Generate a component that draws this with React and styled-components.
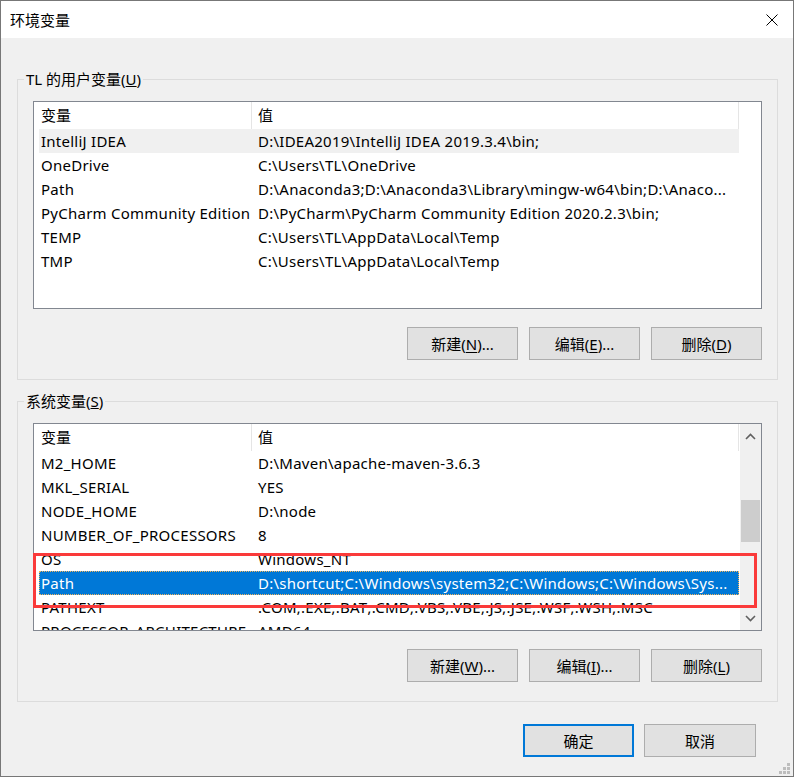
import React from 'react';
import styled, { createGlobalStyle } from 'styled-components';

const Global = createGlobalStyle`
  html, body { margin: 0; padding: 0; background: #f0f0f0; }
  body { font-family: "Noto Sans", "Noto Sans CJK SC", sans-serif; }
  * { box-sizing: border-box; }
`;

const Window = styled.div`
  position: relative;
  width: 794px;
  height: 777px;
  border: 1px solid #777777;
  background: #f0f0f0;
  display: flex;
  flex-direction: column;
  font-size: 15px;
  color: #000;
  overflow: hidden;
`;

const TitleBar = styled.div`
  height: 37px;
  flex: none;
  background: #ffffff;
  display: flex;
  align-items: center;
  justify-content: space-between;
  padding: 0 15px 0 9px;
`;

const Title = styled.span`
  font-size: 15px;
  line-height: 20px;
`;

const CloseButton = styled.span`
  display: flex;
  width: 12px;
  height: 12px;
`;

const Body = styled.div`
  flex: 1;
  display: flex;
  flex-direction: column;
  padding: 31px 15px 0 16px;
`;

const Group = styled.fieldset`
  margin: ${p => p.$mt || 0}px 0 0 0;
  padding: 12px 15px 19px 15px;
  border: 1px solid #dcdcdc;
  min-width: 0;
  display: flex;
  flex-direction: column;
`;

const Legend = styled.legend`
  margin-left: -9px;
  padding: 0 2px;
  font-size: 15px;
  line-height: 20px;
`;

const ListBox = styled.div`
  position: relative;
  height: 208px;
  border: 1px solid #828790;
  background: #ffffff;
  display: flex;
`;

const ListContent = styled.div`
  flex: 1;
  min-width: 0;
  padding-left: 5px;
  overflow: hidden;
`;

const HeaderRow = styled.div`
  display: flex;
  height: 27px;
`;

const HeaderCell = styled.div`
  width: ${p => p.$w}px;
  padding-left: ${p => p.$pad}px;
  border-right: 1px solid #e5e5e5;
  line-height: 27px;
  white-space: nowrap;
`;

const Row = styled.div`
  display: flex;
  width: 700px;
  height: 24px;
  line-height: 24px;
  background: ${p => (p.$selected ? '#0078d7' : p.$hover ? '#f0f0f0' : 'transparent')};
  color: ${p => (p.$selected ? '#ffffff' : '#000000')};
  outline: ${p => (p.$selected ? '1px dotted #f2b35b' : 'none')};
  outline-offset: -1px;
`;

const Cell = styled.div`
  width: ${p => p.$w}px;
  padding-left: ${p => p.$pad}px;
  white-space: nowrap;
  overflow: hidden;
  text-overflow: ellipsis;
  letter-spacing: 0.25px;
`;

const ScrollBar = styled.div`
  width: 21px;
  flex: none;
  background: #f0f0f0;
  display: flex;
  flex-direction: column;
`;

const ScrollArrow = styled.div`
  height: 24px;
  flex: none;
  display: flex;
  align-items: center;
  justify-content: center;
`;

const ScrollTrack = styled.div`
  flex: 1;
  padding: 0 1px;
`;

const Thumb = styled.div`
  height: 42px;
  background: #cdcdcd;
`;

const ButtonRow = styled.div`
  display: flex;
  justify-content: flex-end;
  gap: ${p => p.$gap || 11}px;
  margin-top: ${p => p.$mt || 0}px;
  padding-right: ${p => p.$pr || 0}px;
`;

const Button = styled.button`
  width: ${p => p.$w || 111}px;
  height: 33px;
  background: #e1e1e1;
  border: ${p => (p.$default ? '2px solid #0078d7' : '1px solid #adadad')};
  font-family: "Noto Sans", "Noto Sans CJK SC", sans-serif;
  font-size: 15px;
  line-height: 20px;
  color: #000;
  padding: 0;
  u { text-decoration-thickness: 1px; text-underline-offset: 2px; }
`;

const Highlight = styled.div`
  position: absolute;
  left: -1px;
  top: 129px;
  width: 724px;
  height: 55px;
  border: 3px solid #fa3a3a;
  pointer-events: none;
`;

const Grip = styled.div`
  position: absolute;
  right: 3px;
  bottom: 2px;
  display: grid;
  grid-template-columns: repeat(3, 3px);
  grid-template-rows: repeat(3, 3px);
  gap: 1px;
`;

const GripDot = styled.span`
  background: ${p => (p.$on ? '#bdbdbd' : 'transparent')};
`;

const userVars = [
  ['IntelliJ IDEA', 'D:\\IDEA2019\\IntelliJ IDEA 2019.3.4\\bin;'],
  ['OneDrive', 'C:\\Users\\TL\\OneDrive'],
  ['Path', 'D:\\Anaconda3;D:\\Anaconda3\\Library\\mingw-w64\\bin;D:\\Anaco...'],
  ['PyCharm Community Edition', 'D:\\PyCharm\\PyCharm Community Edition 2020.2.3\\bin;'],
  ['TEMP', 'C:\\Users\\TL\\AppData\\Local\\Temp'],
  ['TMP', 'C:\\Users\\TL\\AppData\\Local\\Temp'],
];

const sysVars = [
  ['M2_HOME', 'D:\\Maven\\apache-maven-3.6.3'],
  ['MKL_SERIAL', 'YES'],
  ['NODE_HOME', 'D:\\node'],
  ['NUMBER_OF_PROCESSORS', '8'],
  ['OS', 'Windows_NT'],
  ['Path', 'D:\\shortcut;C:\\Windows\\system32;C:\\Windows;C:\\Windows\\Sys...'],
  ['PATHEXT', '.COM;.EXE;.BAT;.CMD;.VBS;.VBE;.JS;.JSE;.WSF;.WSH;.MSC'],
  ['PROCESSOR_ARCHITECTURE', 'AMD64'],
];

const Chevron = ({ up }) => (
  <svg width="11" height="7" viewBox="0 0 11 7">
    <polyline
      points={up ? '1,6 5.5,1.5 10,6' : '1,1 5.5,5.5 10,1'}
      fill="none"
      stroke="#606060"
      strokeWidth="1.6"
    />
  </svg>
);

const VarList = ({ rows, hoverIndex, selectedIndex, scroll, children }) => (
  <ListBox>
    <ListContent>
      <HeaderRow>
        <HeaderCell $w={213} $pad={2}>变量</HeaderCell>
        <HeaderCell $w={487} $pad={6}>值</HeaderCell>
      </HeaderRow>
      {rows.map(([name, value], i) => (
        <Row key={name} $hover={i === hoverIndex} $selected={i === selectedIndex}>
          <Cell $w={213} $pad={2}>{name}</Cell>
          <Cell $w={487} $pad={6}>{value}</Cell>
        </Row>
      ))}
    </ListContent>
    {scroll && (
      <ScrollBar>
        <ScrollArrow><Chevron up /></ScrollArrow>
        <ScrollTrack>
          <Thumb style={{ marginTop: 52 }} />
        </ScrollTrack>
        <ScrollArrow><Chevron /></ScrollArrow>
      </ScrollBar>
    )}
    {children}
  </ListBox>
);

export default function App() {
  return (
    <>
      <Global />
      <Window>
        <TitleBar>
          <Title>环境变量</Title>
          <CloseButton>
            <svg width="12" height="12" viewBox="0 0 12 12">
              <path d="M0.5 0.5 L11.5 11.5 M11.5 0.5 L0.5 11.5" stroke="#000" strokeWidth="1" fill="none" />
            </svg>
          </CloseButton>
        </TitleBar>
        <Body>
          <Group>
            <Legend>TL 的用户变量(<u>U</u>)</Legend>
            <VarList rows={userVars} hoverIndex={0} selectedIndex={-1} />
            <ButtonRow $mt={18}>
              <Button>新建(<u>N</u>)...</Button>
              <Button>编辑(<u>E</u>)...</Button>
              <Button>删除(<u>D</u>)</Button>
            </ButtonRow>
          </Group>
          <Group $mt={11}>
            <Legend>系统变量(<u>S</u>)</Legend>
            <VarList rows={sysVars} hoverIndex={-1} selectedIndex={5} scroll>
              <Highlight />
            </VarList>
            <ButtonRow $mt={18}>
              <Button>新建(<u>W</u>)...</Button>
              <Button>编辑(<u>I</u>)...</Button>
              <Button>删除(<u>L</u>)</Button>
            </ButtonRow>
          </Group>
          <ButtonRow $mt={22} $pr={22} $gap={10}>
            <Button $default>确定</Button>
            <Button $w={112}>取消</Button>
          </ButtonRow>
        </Body>
        <Grip>
          <GripDot />
          <GripDot />
          <GripDot $on />
          <GripDot />
          <GripDot $on />
          <GripDot $on />
          <GripDot $on />
          <GripDot $on />
          <GripDot $on />
        </Grip>
      </Window>
    </>
  );
}
